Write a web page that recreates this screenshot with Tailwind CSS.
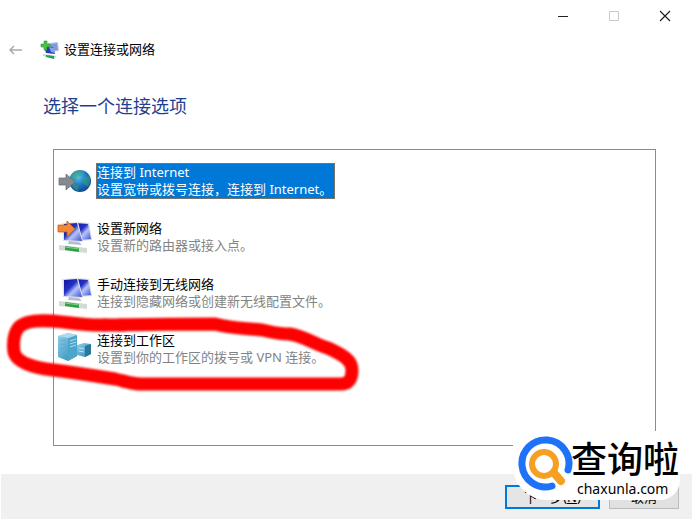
<!DOCTYPE html>
<html lang="zh-CN">
  <head>
    <meta charset="UTF-8" />
    <meta name="viewport" content="width=device-width, initial-scale=1.0" />
    <script src="https://cdn.jsdelivr.net/npm/@tailwindcss/browser@4"></script>
    <title>设置连接或网络</title>
  </head>
  <body class="bg-white">
    <!-- shared icon shapes -->
    <svg class="absolute size-0" aria-hidden="true">
      <defs>
        <linearGradient id="screen" x1="0" y1="0" x2="1" y2="1">
          <stop offset="0" stop-color="#14149a" />
          <stop offset="0.4" stop-color="#2430c4" />
          <stop offset="0.6" stop-color="#b4c4f8" />
          <stop offset="1" stop-color="#3c50d0" />
        </linearGradient>
        <radialGradient id="globe" cx="0.4" cy="0.3" r="0.8">
          <stop offset="0" stop-color="#5cc4ea" />
          <stop offset="0.5" stop-color="#1c78c0" />
          <stop offset="1" stop-color="#0c3c84" />
        </radialGradient>
        <linearGradient id="server" x1="0" y1="0" x2="1" y2="1">
          <stop offset="0" stop-color="#8fd0ea" />
          <stop offset="1" stop-color="#2c86b4" />
        </linearGradient>
        <symbol id="computers" viewBox="0 0 36 36">
          <path d="M17 3l15 1 3 17-13 1z" fill="#d4d9e2" />
          <path d="M18 4l13 1 3 15-12 1z" fill="url(#screen)" />
          <path d="M5 4l16-1 5 20-20-1z" fill="#dfe3ea" />
          <path d="M7 5l13-1 5 18-18-1z" fill="url(#screen)" />
          <path d="M12 22l10 1 3 3-14-1z" fill="#b8bec6" />
          <path d="M2 26l28 3v5L2 31z" fill="#d2dad4" />
          <path d="M8 27l14 2v4L8 31z" fill="#2fa044" />
          <path d="M8 28l14 2" stroke="#7cd487" stroke-width="1" />
        </symbol>
      </defs>
    </svg>

    <div
      class="relative flex min-h-screen flex-col overflow-hidden pb-px pl-px font-['Noto_Sans','Noto_Sans_CJK_SC',sans-serif] text-[13px] text-black"
    >
      <!-- window controls -->
      <div class="flex h-8 justify-end pr-0.5">
        <button class="flex w-[51px] items-center justify-center" aria-label="最小化">
          <svg class="size-3" viewBox="0 0 12 12"><path d="M1 6.500h10" stroke="#222" /></svg>
        </button>
        <button class="flex w-[51px] items-center justify-center" aria-label="最大化" disabled>
          <svg class="size-3" viewBox="0 0 12 12" fill="none"><path d="M1.500 1.500h9v9h-9z" stroke="#c8c8c8" /></svg>
        </button>
        <button class="flex w-[51px] items-center justify-center" aria-label="关闭">
          <svg class="size-3" viewBox="0 0 12 12"><path d="M1 1l10 10M11 1L1 11" stroke="#222" stroke-width="1.200" /></svg>
        </button>
      </div>

      <header class="flex h-9 items-center pl-[7px]">
        <button class="mr-4 flex" aria-label="返回" disabled>
          <svg class="size-4" viewBox="0 0 16 16" fill="none" stroke="#aaa" stroke-width="1.500">
            <path d="M14 8H2M6 4L2 8l4 4" />
          </svg>
        </button>
        <svg class="mr-1 size-5" viewBox="0 0 20 20">
          <path d="M8 3l10-1 1 9-9 1z" fill="#c4cddd" />
          <path d="M10 4l7-1 1 7-7 1z" fill="#7f9ae0" />
          <path d="M4 6l9 1 2 7-9-1z" fill="#2a3fae" />
          <path d="M9 7l5 1 1 5-4-1z" fill="#86a0ea" />
          <path d="M3 14l13 2-1 3-12-3z" fill="#c2d8cc" />
          <path d="M6 15l8 1v3l-8-2z" fill="#2a9a68" />
          <path d="M4 1h3v3h3v3H7v3H4V7H1V4h3z" fill="#4cc04c" stroke="#23802a" stroke-width="0.500" />
        </svg>
        <h1>设置连接或网络</h1>
      </header>

      <main class="flex flex-1 flex-col pr-9 pl-[42px]">
        <h2 class="mt-6 text-[18px] leading-7 text-[#1f3f8f]">选择一个连接选项</h2>
        <div
          class="mt-[29px] mb-7 ml-[10px] flex flex-1 flex-col border border-[#8c8c8c] pt-[3px] pl-[3px] leading-[17px]"
        >
          <button class="flex h-14 items-center gap-[3px] text-left">
            <svg class="size-9" viewBox="0 0 36 36">
              <circle cx="23" cy="18" r="11" fill="url(#globe)" />
              <path d="M16 10c3-3 8-3 10-1l-2 4-4 1-1 4-5-2c0-3 0-4 2-6zM27 14l5-1c2 4 1 8-1 11l-4-3-2-4zM17 21l5 2-1 5c-3-1-5-3-6-6z" fill="#3fa36a" opacity="0.500" />
              <path d="M2 15h7v-4l9 8-9 8v-5H2z" fill="#858a92" stroke="#666b72" stroke-width="0.700" />
            </svg>
            <span class="border border-[#7a7264] bg-[#0078d7] pr-0.5 text-white">
              <span class="block">连接到 Internet</span>
              <span class="block">设置宽带或拨号连接，连接到 Internet。</span>
            </span>
          </button>
          <button class="flex h-14 items-center gap-1 text-left">
            <svg class="size-9" viewBox="0 0 36 36">
              <use href="#computers" />
              <path d="M1 6h9V2l8 8-8 8v-5H1z" fill="#f58634" stroke="#b8581c" stroke-width="0.700" />
            </svg>
            <span>
              <span class="block">设置新网络</span>
              <span class="block text-[#838383]">设置新的路由器或接入点。</span>
            </span>
          </button>
          <button class="flex h-14 items-center gap-1 text-left">
            <svg class="size-9" viewBox="0 0 36 36"><use href="#computers" /></svg>
            <span>
              <span class="block">手动连接到无线网络</span>
              <span class="block text-[#838383]">连接到隐藏网络或创建新无线配置文件。</span>
            </span>
          </button>
          <button class="flex h-14 items-center gap-1 text-left">
            <svg class="size-9" viewBox="0 0 36 36">
              <path d="M20 14l7-2 7 1v10l-6 3-8-2z" fill="url(#server)" />
              <path d="M28 15l6-2v10l-6 3z" fill="#2a789c" />
              <path d="M22 17l5 1M22 20l5 1" stroke="#bfe6f4" />
              <path d="M1 5l10-3 9 2v21l-9 5-10-4z" fill="url(#server)" />
              <path d="M11 7l9-2v20l-9 5z" fill="#4ba6cb" />
              <path d="M1 5l10-3 9 2-9 3z" fill="#acdcec" />
              <path d="M13 10l6-2M13 13l6-2M13 16l6-2" stroke="#a5dcf0" />
              <path d="M3 9l6 1M3 13l6 1M3 17l6 1" stroke="#5fb0d2" />
            </svg>
            <span>
              <span class="block">连接到工作区</span>
              <span class="block text-[#838383]">设置到你的工作区的拨号或 VPN 连接。</span>
            </span>
          </button>
        </div>
      </main>

      <footer class="flex h-[45px] items-center justify-end gap-[9px] bg-[#f0f0f0] pr-[13px]">
        <button class="h-6 w-[95px] border-2 border-[#0078d7] bg-[#e5e5e5] leading-5">下一步(<u>N</u>)</button>
        <button class="h-6 w-[70px] border border-[#bcbcbc] bg-[#e1e1e1] leading-5">取消</button>
      </footer>

      <!-- hand-drawn marker -->
      <svg
        class="pointer-events-none absolute top-[310px] left-0 h-[90px] w-[370px] blur-[1px]"
        viewBox="0 0 370 90"
        fill="none"
        stroke="#ff0000"
        stroke-width="13"
        stroke-linecap="round"
        stroke-linejoin="round"
      >
        <path
          d="M106 15C85 16 68 12 52 11C38 10 25 11 19 17C13 24 13 34 14 42C16 51 28 56 46 59C70 62 90 65 115 69C125 71 130 74 142 74H340C350 74 352 68 352 60C352 50 343 45 328 38C314 34 306 27 290 24C278 24 272 22 262 20C245 18 235 19 215 14C180 14 145 14 120 15"
        />
        <path d="M104 15h20" />
      </svg>

      <!-- site badge -->
      <div class="absolute right-3 bottom-5 flex h-[69px] w-[167px] rounded-br-[20px] rounded-bl-[34px] bg-white">
        <svg class="mt-[5px] ml-[4px] size-[58px] shrink-0" viewBox="0 0 58 58" fill="none" stroke-linecap="round">
          <path d="M51 34A23.500 23.500 0 1 0 35 50" stroke="#1d72f8" stroke-width="7" />
          <circle cx="27" cy="28" r="12" stroke="#f6a023" stroke-width="6" />
          <path d="M37 37l7 8" stroke="#f6a023" stroke-width="8" />
        </svg>
        <div class="-ml-1 whitespace-nowrap">
          <div class="mt-2 text-[36px] leading-[42px] font-medium">查询啦</div>
          <div class="pl-1.5 text-[14px] leading-4">chaxunla.com</div>
        </div>
      </div>
    </div>
  </body>
</html>
